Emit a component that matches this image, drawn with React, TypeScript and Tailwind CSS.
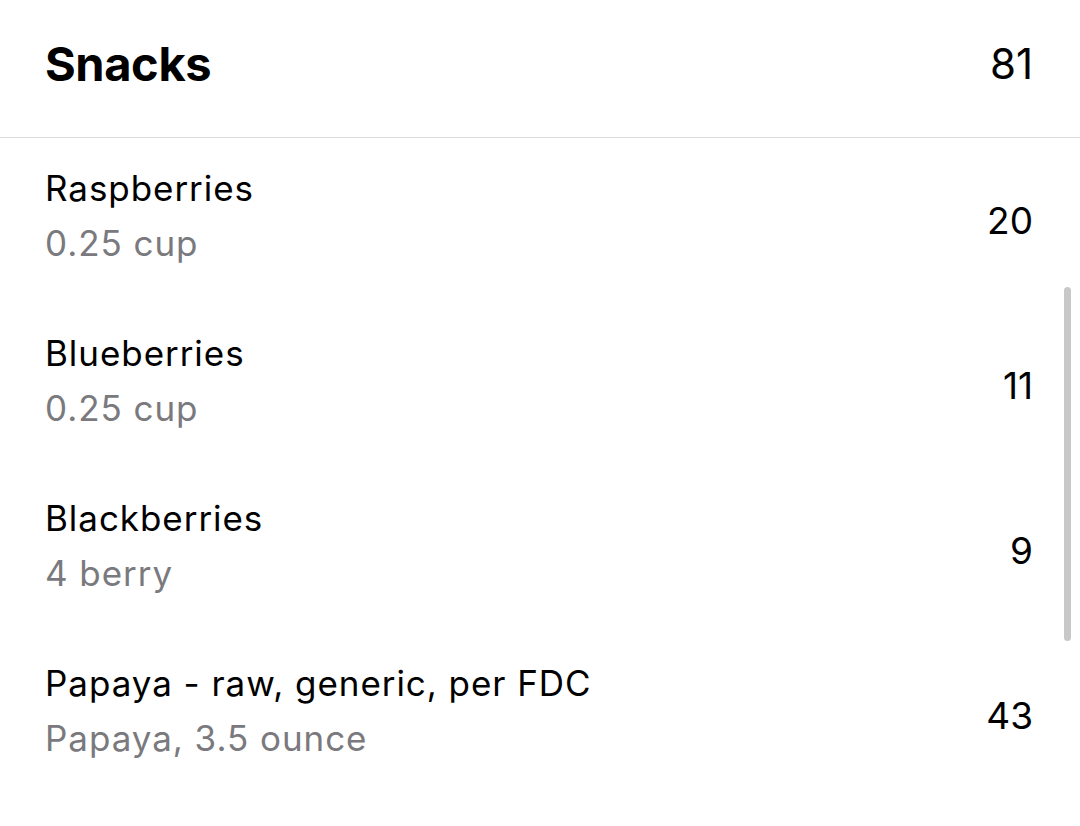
import React from 'react';

const items = [
  { name: 'Raspberries', serving: '0.25 cup', cal: 20 },
  { name: 'Blueberries', serving: '0.25 cup', cal: 11 },
  { name: 'Blackberries', serving: '4 berry', cal: 9 },
  { name: 'Papaya - raw, generic, per FDC', serving: 'Papaya, 3.5 ounce', cal: 43 },
];

export default function App() {
  return (
    <div className="relative h-[826px] w-[1080px] overflow-hidden bg-white font-['Inter',sans-serif] text-black">
      {/* Section header */}
      <header className="flex h-[138px] items-center justify-between border-b border-[#dcdcdc] pb-[10px] pl-[45px] pr-[47px]">
        <h1 className="text-[47px] font-bold leading-none tracking-[-0.4px]">Snacks</h1>
        <span className="text-[42px] leading-none">81</span>
      </header>

      {/* Food rows */}
      <div className="flex flex-col gap-[55px] pl-[45px] pr-[47px] pt-[23px]">
        {items.map((item) => (
          <div key={item.name} className="flex items-center justify-between">
            <div className="flex flex-col tracking-[0.95px]">
              <span className="text-[35px] leading-[55px]">{item.name}</span>
              <span className="text-[35px] leading-[55px] text-[#7a7a7e]">{item.serving}</span>
            </div>
            <span className="pt-2 text-[37px] leading-none">{item.cal}</span>
          </div>
        ))}
      </div>

      {/* Scroll indicator */}
      <div className="absolute left-[1064px] top-[287px] h-[354px] w-[7px] rounded-full bg-[#c8c8c8]" />
    </div>
  );
}
